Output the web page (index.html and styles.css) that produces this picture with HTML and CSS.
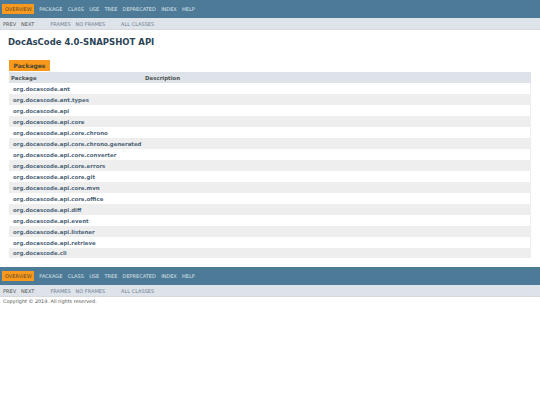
FILE: index.html
```html
<!DOCTYPE html>
<html lang="en">
<head>
    <meta charset="UTF-8">
    <title>Overview (DocAsCode 4.0-SNAPSHOT API)</title>
    <link rel="stylesheet" href="styles.css">
</head>
<body>
    <div class="top-nav">
        <ul class="nav-list">
            <li class="nav-current">OVERVIEW</li>
            <li><a href="#">PACKAGE</a></li>
            <li>CLASS</li>
            <li>USE</li>
            <li><a href="#">TREE</a></li>
            <li><a href="#">DEPRECATED</a></li>
            <li><a href="#">INDEX</a></li>
            <li><a href="#">HELP</a></li>
        </ul>
    </div>
    <div class="sub-nav">
        <span class="sub-item">PREV</span>
        <span class="sub-item sub-next">NEXT</span>
        <a class="sub-item sub-frames" href="#">FRAMES</a>
        <a class="sub-item sub-noframes" href="#">NO FRAMES</a>
        <a class="sub-item sub-all" href="#">ALL CLASSES</a>
    </div>

    <h1 class="title">DocAsCode 4.0-SNAPSHOT API</h1>

    <div class="summary">
        <div class="caption"><span>Packages</span></div>
        <div class="row head">
            <div class="col-first">Package</div>
            <div class="col-last">Description</div>
        </div>
        <div class="row"><a class="col-first" href="#">org.docascode.ant</a></div>
        <div class="row alt"><a class="col-first" href="#">org.docascode.ant.types</a></div>
        <div class="row"><a class="col-first" href="#">org.docascode.api</a></div>
        <div class="row alt"><a class="col-first" href="#">org.docascode.api.core</a></div>
        <div class="row"><a class="col-first" href="#">org.docascode.api.core.chrono</a></div>
        <div class="row alt"><a class="col-first" href="#">org.docascode.api.core.chrono.generated</a></div>
        <div class="row"><a class="col-first" href="#">org.docascode.api.core.converter</a></div>
        <div class="row alt"><a class="col-first" href="#">org.docascode.api.core.errors</a></div>
        <div class="row"><a class="col-first" href="#">org.docascode.api.core.git</a></div>
        <div class="row alt"><a class="col-first" href="#">org.docascode.api.core.mvn</a></div>
        <div class="row"><a class="col-first" href="#">org.docascode.api.core.office</a></div>
        <div class="row alt"><a class="col-first" href="#">org.docascode.api.diff</a></div>
        <div class="row"><a class="col-first" href="#">org.docascode.api.event</a></div>
        <div class="row alt"><a class="col-first" href="#">org.docascode.api.listener</a></div>
        <div class="row"><a class="col-first" href="#">org.docascode.api.retrieve</a></div>
        <div class="row alt"><a class="col-first" href="#">org.docascode.cli</a></div>
    </div>

    <div class="top-nav bottom">
        <ul class="nav-list">
            <li class="nav-current">OVERVIEW</li>
            <li><a href="#">PACKAGE</a></li>
            <li>CLASS</li>
            <li>USE</li>
            <li><a href="#">TREE</a></li>
            <li><a href="#">DEPRECATED</a></li>
            <li><a href="#">INDEX</a></li>
            <li><a href="#">HELP</a></li>
        </ul>
    </div>
    <div class="sub-nav">
        <span class="sub-item">PREV</span>
        <span class="sub-item sub-next">NEXT</span>
        <a class="sub-item sub-frames" href="#">FRAMES</a>
        <a class="sub-item sub-noframes" href="#">NO FRAMES</a>
        <a class="sub-item sub-all" href="#">ALL CLASSES</a>
    </div>
    <p class="legal">Copyright © 2019. All rights reserved.</p>
</body>
</html>
```

FILE: styles.css
```css
body {
    margin: 0;
    background-color: #ffffff;
    color: #4f5350;
    font-family: "DejaVu Sans", Arial, sans-serif;
    font-size: 5px;
}
a {
    color: #6f8294;
    text-decoration: none;
}
.top-nav {
    height: 18px;
    background-color: #4d7a97;
    display: flex;
    align-items: center;
    padding-left: 2px;
}
.top-nav.bottom {
    margin-top: 9px;
}
.nav-list {
    display: flex;
    align-items: center;
    gap: 5.3px;
    margin: 0;
    padding: 0;
    list-style: none;
    color: #dbe4ea;
    font-size: 5px;
}
.nav-list a {
    color: #dbe4ea;
}
.nav-current {
    background-color: #f8981d;
    color: #5c4a2c;
    padding: 2.5px 3px;
    line-height: 5px;
    width: 26px;
}
.sub-nav {
    height: 12px;
    box-sizing: border-box;
    background-color: #dee3e9;
    border-bottom: 1px solid #d6d9dc;
    display: flex;
    align-items: center;
    padding-left: 3px;
}
.sub-next {
    margin-left: 5px;
}
.sub-frames {
    margin-left: 16px;
}
.sub-noframes {
    margin-left: 5px;
}
.sub-all {
    margin-left: 16px;
}
.title {
    margin: 0;
    padding: 7px 0 0 8px;
    height: 23px;
    box-sizing: border-box;
    color: #2c4557;
    font-size: 8.5px;
    line-height: 11px;
    font-weight: bold;
}
.summary {
    margin: 7px 9px 0 9px;
}
.caption {
    height: 12px;
}
.caption span {
    display: inline-block;
    width: 41px;
    height: 11px;
    background-color: #f8981d;
    color: #4a4630;
    font-size: 6px;
    font-weight: bold;
    line-height: 11px;
    text-align: center;
}
.row {
    display: flex;
    box-sizing: border-box;
    height: 10.97px;
    padding-top: 1px;
    align-items: center;
    background-color: #ffffff;
    border-right: 1px solid #eeeeef;
    font-size: 5.45px;
    font-weight: bold;
}
.row:last-child {
    border-bottom: 1px solid #eeeeef;
}
.row a {
    color: #4f6679;
}
.row.alt {
    background-color: #eeeeef;
}
.row.head {
    background-color: #dee3e9;
    border-right: none;
    color: #4f5350;
}
.row .col-first {
    margin-left: 4px;
}
.row.head .col-first {
    margin-left: 2px;
    width: 134px;
}
.legal {
    margin: 1px 0 0;
    padding: 0 0 0 3px;
    font-size: 4.9px;
    line-height: 6px;
}
```
